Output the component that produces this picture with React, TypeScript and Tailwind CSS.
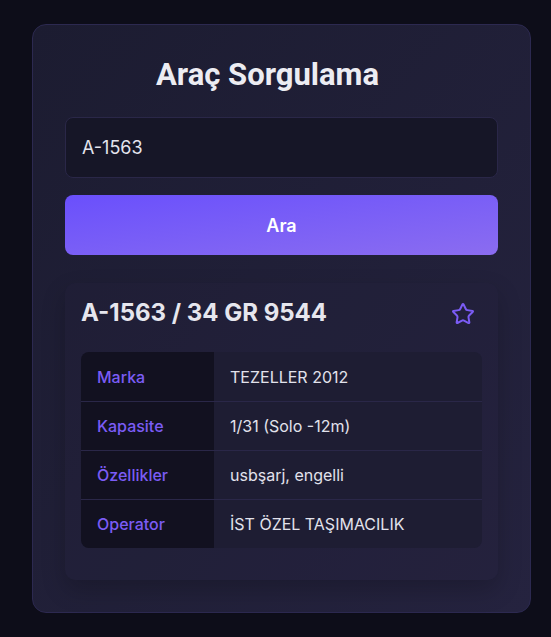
import React from "react";

const rows: [string, string][] = [
  ["Marka", "TEZELLER 2012"],
  ["Kapasite", "1/31 (Solo -12m)"],
  ["Özellikler", "usbşarj, engelli"],
  ["Operator", "İST ÖZEL TAŞIMACILIK"],
];

export default function App() {
  return (
    <div
      className="min-h-[637px] w-full bg-[#0d0d19] pt-6 pl-8"
      style={{ fontFamily: "Inter, 'Noto Sans', sans-serif" }}
    >
      <div className="w-[499px] rounded-[14px] border border-[#2c2950] bg-gradient-to-br from-[#1c1c31] to-[#25233f] px-[32px] pt-[32px] pb-[32px]">
        <h1
          className="pr-[28px] text-center text-[31px] leading-[36px] font-bold text-[#ececf2]"
          style={{ fontFamily: "Roboto, 'Noto Sans', sans-serif" }}
        >
          Araç Sorgulama
        </h1>
        <div className="mt-[24px] flex h-[61px] items-center rounded-[8px] border border-[#2a2748] bg-[#161627] px-[16px] text-[18px] text-[#e4e4ee]">
          A-1563
        </div>
        <button className="mt-[17px] flex h-[60px] w-full items-center justify-center rounded-[8px] bg-gradient-to-br from-[#6a4ffc] to-[#8b6cf0] text-[18px] font-semibold text-white">
          Ara
        </button>
        <div className="mt-[28px] rounded-[10px] bg-[#22213a]/25 px-[16px] pt-[15px] pb-[32px] shadow-[0_10px_24px_rgba(0,0,0,0.2)]">
          <div className="flex items-start justify-between">
            <div className="text-[24px] leading-[30px] font-bold text-[#e6e6ee]">
              A-1563 / 34 GR 9544
            </div>
            <button className="mt-[4px] mr-[7px] text-[#7b5cf5]">
              <svg width="24" height="24" viewBox="0 0 24 24" fill="none" stroke="currentColor" strokeWidth="2" strokeLinecap="round" strokeLinejoin="round">
                <path d="M11.525 2.295a.53.53 0 0 1 .95 0l2.31 4.679a2.123 2.123 0 0 0 1.595 1.16l5.166.756a.53.53 0 0 1 .294.904l-3.736 3.638a2.123 2.123 0 0 0-.611 1.878l.882 5.14a.53.53 0 0 1-.771.56l-4.618-2.428a2.122 2.122 0 0 0-1.973 0L6.396 21.01a.53.53 0 0 1-.77-.56l.881-5.139a2.122 2.122 0 0 0-.611-1.879L2.16 9.795a.53.53 0 0 1 .294-.906l5.165-.755a2.122 2.122 0 0 0 1.597-1.16z" />
              </svg>
            </button>
          </div>
          <div className="mt-[24px] overflow-hidden rounded-[8px] bg-[#1e1d33]">
            {rows.map(([k, v], i) => (
              <div
                key={k}
                className={`flex h-[49px] ${i > 0 ? "border-t border-[#2a2748]" : ""}`}
              >
                <div className="flex w-[133px] items-center bg-[#121120] pl-[16px] text-[16px] font-medium text-[#7b5cf5]">
                  {k}
                </div>
                <div className="flex flex-1 items-center pl-[16px] text-[16px] text-[#e2e2ec]">
                  {v}
                </div>
              </div>
            ))}
          </div>
        </div>
      </div>
    </div>
  );
}
